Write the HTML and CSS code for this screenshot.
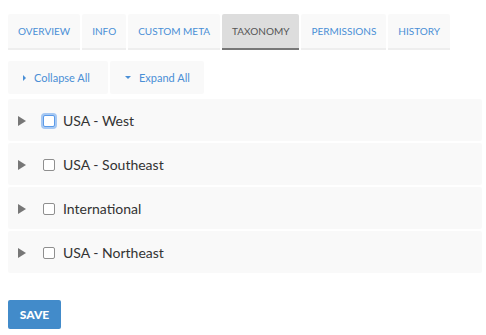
FILE: index.html
```html
<!DOCTYPE html>
<html>
<head>
    <title>Taxonomy</title>
    <link rel="stylesheet" href="styles.css">
</head>
<body>
    <div class="page">
        <ul class="tabs">
            <li class="tab">Overview</li>
            <li class="tab">Info</li>
            <li class="tab">Custom Meta</li>
            <li class="tab active">Taxonomy</li>
            <li class="tab">Permissions</li>
            <li class="tab">History</li>
        </ul>

        <div class="toolbar">
            <button type="button" class="tbtn collapse"><span class="caret-right"></span>Collapse All</button>
            <button type="button" class="tbtn expand"><span class="caret-down"></span>Expand All</button>
        </div>

        <div class="tree">
            <div class="node">
                <span class="arrow"></span>
                <span class="check focused"></span>
                <span class="label">USA - West</span>
            </div>
            <div class="node">
                <span class="arrow"></span>
                <span class="check"></span>
                <span class="label">USA - Southeast</span>
            </div>
            <div class="node">
                <span class="arrow"></span>
                <span class="check"></span>
                <span class="label">International</span>
            </div>
            <div class="node">
                <span class="arrow"></span>
                <span class="check"></span>
                <span class="label">USA - Northeast</span>
            </div>
        </div>

        <button type="button" class="savebtn">Save</button>
    </div>
</body>
</html>
```

FILE: styles.css
```css
body {
    margin: 0;
    font-family: Lato, "Open Sans", Arial, sans-serif;
    background: #fff;
}

.page {
    padding: 14px 4px 8px 8px;
}

.tabs {
    list-style: none;
    margin: 0;
    padding: 0;
    display: flex;
    gap: 2px;
}

.tab {
    height: 34px;
    line-height: 35px;
    padding: 0 10px;
    background-color: #f9f9f9;
    border-bottom: 2px solid #eeeeee;
    border-radius: 2px 2px 0 0;
    color: #4a8fd6;
    font-size: 10px;
    text-transform: uppercase;
}

.tab.active {
    background-color: #dddddd;
    border-bottom-color: #777777;
    color: #555555;
}

.toolbar {
    display: flex;
    gap: 2px;
    margin-top: 11px;
}

.tbtn {
    display: flex;
    align-items: center;
    height: 33px;
    padding: 0 0 0 15px;
    border: none;
    border-radius: 2px;
    background-color: #f9f9f9;
    color: #4a8fd6;
    font-family: inherit;
    font-size: 11px;
    white-space: nowrap;
}

.collapse {
    width: 100px;
}

.expand {
    width: 94px;
}

.caret-right {
    width: 0;
    height: 0;
    border-left: 3px solid #4a8fd6;
    border-top: 3px solid transparent;
    border-bottom: 3px solid transparent;
    margin-right: 8px;
}

.caret-down {
    width: 0;
    height: 0;
    border-top: 3px solid #4a8fd6;
    border-left: 3px solid transparent;
    border-right: 3px solid transparent;
    margin-right: 8px;
}

.tree {
    display: flex;
    flex-direction: column;
    gap: 2px;
    margin-top: 5px;
}

.node {
    display: flex;
    align-items: center;
    height: 42px;
    padding-left: 10px;
    padding-top: 1px;
    box-sizing: border-box;
    background-color: #f9f9f9;
    border-radius: 2px;
}

.arrow {
    width: 0;
    height: 0;
    border-left: 8px solid #777777;
    border-top: 5px solid transparent;
    border-bottom: 5px solid transparent;
    margin-right: 17px;
}

.check {
    box-sizing: border-box;
    width: 12px;
    height: 12px;
    border: 1px solid #8f8f8f;
    border-radius: 2px;
    background: #fff;
    margin-right: 8px;
}

.check.focused {
    border-color: #5b9ae8;
    box-shadow: 0 0 0 2px #a6c8f3;
}

.label {
    font-size: 14px;
    color: #333333;
}

.savebtn {
    margin-top: 27px;
    width: 53px;
    height: 29px;
    border: none;
    border-radius: 2px;
    background-color: #428bca;
    color: #fff;
    font-family: inherit;
    font-size: 12px;
    font-weight: 900;
    text-transform: uppercase;
}
```
